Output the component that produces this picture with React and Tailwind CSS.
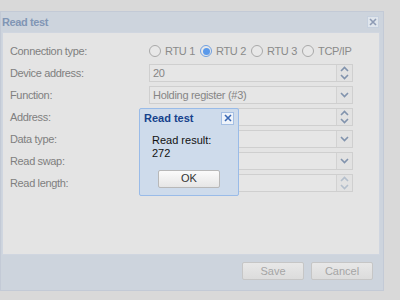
import React from "react";

/* Masked ExtJS-style "Read test" window with a modal result box on top. */

const F = { fontFamily: '"Liberation Sans", Arial, sans-serif' };

function Chevron({ up, faded }) {
  return (
    <svg width="9" height="6" viewBox="0 0 9 6">
      <path d={up ? "M1 5 L4.5 1.5 L8 5" : "M1 1 L4.5 4.5 L8 1"} fill="none" stroke={faded ? "#b4bfcc" : "#8193ad"} strokeWidth="1.6" />
    </svg>
  );
}

function Field({ value, kind, faded }) {
  return (
    <div className="flex h-[18px] w-[204px] border border-[#cfcfcf] bg-[#e6e6e6]">
      <div className="flex-1 whitespace-nowrap px-[3px] text-[11px] leading-[16px] tracking-[-0.3px] text-[#858585]">{value}</div>
      <div className="flex w-[16px] flex-col items-center justify-center gap-[2px] border-l border-[#d2d2d2] bg-[#e2e2e2]">
        {kind === "spin" ? (
          <>
            <Chevron up faded={faded} />
            <Chevron faded={faded} />
          </>
        ) : (
          <Chevron faded={faded} />
        )}
      </div>
    </div>
  );
}

function Radio({ label, on }) {
  return (
    <div className="flex w-[51px] items-center gap-[4px] whitespace-nowrap">
      <div className={`flex h-[12px] w-[12px] shrink-0 items-center justify-center rounded-full border ${on ? "border-[#6f9fe0]" : "border-[#a9a9a9]"} bg-[#e8e8e8]`}>
        {on && <div className="h-[7px] w-[7px] rounded-full bg-[#5a99ea]" />}
      </div>
      <span className="text-[11px] tracking-[-0.3px] text-[#8a8a8a]">{label}</span>
    </div>
  );
}

const rows = [
  { label: "Device address:", value: "20", kind: "spin" },
  { label: "Function:", value: "Holding register (#3)", kind: "combo" },
  { label: "Address:", value: "", kind: "spin" },
  { label: "Data type:", value: "", kind: "combo" },
  { label: "Read swap:", value: "", kind: "combo" },
  { label: "Read length:", value: "", kind: "spin", faded: true },
];

export default function App() {
  return (
    <div className="relative h-[300px] w-[400px] overflow-hidden bg-[#d9d9d9] pt-[11px]" style={F}>
      {/* outer window */}
      <div className="flex h-[280px] w-[384px] flex-col border border-[#c3cad6] bg-[#cdd4dd]">
        <div className="flex h-[20px] items-center justify-between pl-[1px] pr-[4px]">
          <span className="text-[11px] font-bold tracking-[-0.4px] text-[#8196b5]">Read test</span>
          <div className="flex h-[12px] w-[12px] items-center justify-center border border-[#c6d0de] bg-[#dfe5ec]">
            <svg width="8" height="8" viewBox="0 0 8 8">
              <path d="M1 1 L7 7 M7 1 L1 7" stroke="#8e9bb4" strokeWidth="1.6" />
            </svg>
          </div>
        </div>
        <div className="mx-[1px] mr-[3px] flex h-[223px] flex-col gap-[4px] border border-[#d0d6e0] bg-[#e4e4e4] px-[7px] pt-[9px]">
          <div className="flex h-[18px] items-center">
            <span className="w-[139px] text-[11px] tracking-[-0.35px] text-[#7f7f7f]">Connection type:</span>
            <div className="flex">
              <Radio label="RTU 1" />
              <Radio label="RTU 2" on />
              <Radio label="RTU 3" />
              <Radio label="TCP/IP" />
            </div>
          </div>
          {rows.map((r) => (
            <div key={r.label} className="flex h-[18px] items-center">
              <span className="w-[139px] text-[11px] tracking-[-0.35px] text-[#7f7f7f]">{r.label}</span>
              <Field value={r.value} kind={r.kind} faded={r.faded} />
            </div>
          ))}
        </div>
        <div className="flex flex-1 items-center justify-end gap-[7px] pr-[10px] pb-[3px]">
          {["Save", "Cancel"].map((b) => (
            <div key={b} className="flex h-[18px] w-[62px] items-center justify-center rounded-[2px] border border-[#c6c6c6] bg-gradient-to-b from-[#e8e8e8] to-[#dcdcdc] text-[11px] text-[#a5a5a5]">
              {b}
            </div>
          ))}
        </div>
      </div>

      {/* modal result box */}
      <div className="absolute left-[139px] top-[108px] h-[88px] w-[100px] rounded-[2px] border border-[#99bbe8] bg-[#cedbeb] px-[4px] pt-[1px]">
        <div className="flex items-center justify-between">
          <span className="text-[11px] font-bold text-[#15428b]">Read test</span>
          <div className="flex h-[13px] w-[13px] items-center justify-center border border-[#a5bfe3] bg-[#eef3fa]">
            <svg width="8" height="8" viewBox="0 0 8 8">
              <path d="M1 1 L7 7 M7 1 L1 7" stroke="#3a68b4" strokeWidth="1.6" />
            </svg>
          </div>
        </div>
        <div className="mt-[7px] pl-[8px] text-[11px] leading-[13px] text-[#111]">
          <div>Read result:</div>
          <div>272</div>
        </div>
        <div className="mt-[10px] ml-[14px] flex h-[18px] w-[62px] items-center justify-center rounded-[2px] border border-[#b8b8b8] bg-gradient-to-b from-[#fbfbfb] to-[#e6e6e6] text-[11px] text-[#333]">
          OK
        </div>
      </div>
    </div>
  );
}
